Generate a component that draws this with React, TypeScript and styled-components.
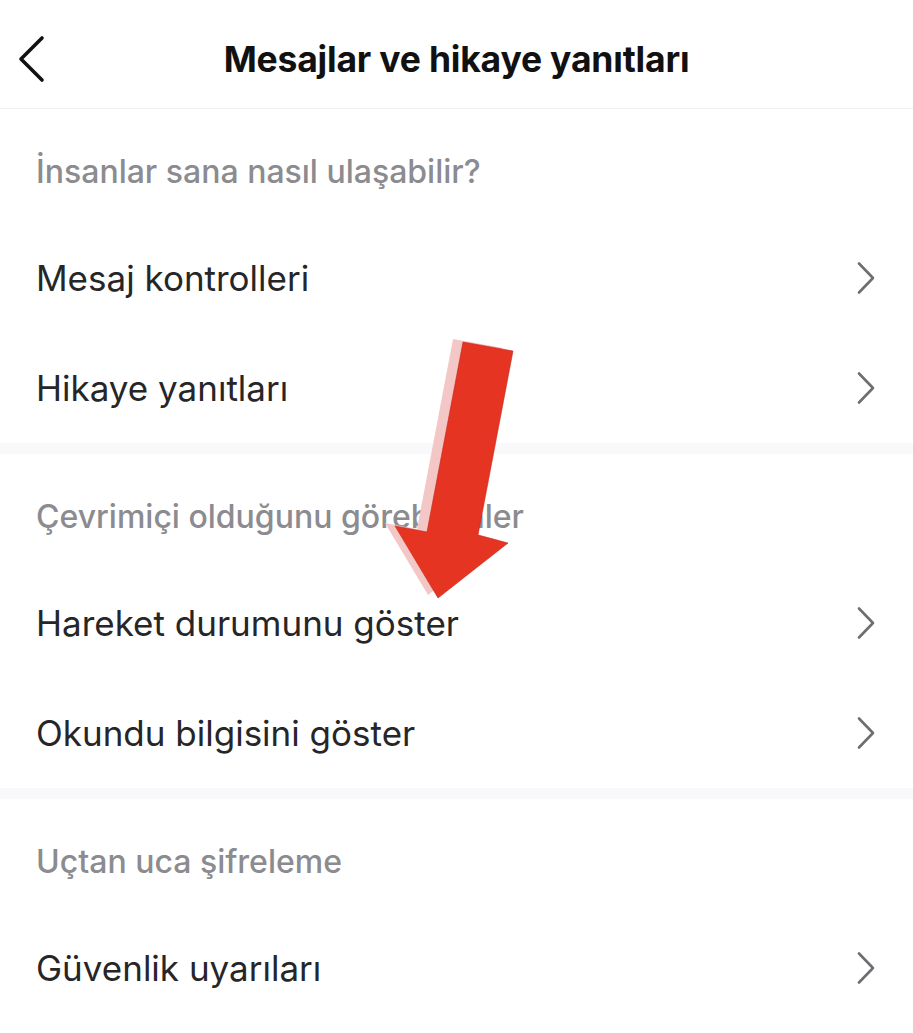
import React from "react";
import styled, { createGlobalStyle } from "styled-components";

const Global = createGlobalStyle`
  html, body { margin: 0; padding: 0; background: #ffffff; }
  body { font-family: Inter, "Noto Sans", sans-serif; -webkit-font-smoothing: antialiased; }
`;

const Page = styled.div`
  position: relative;
  width: 913px;
  height: 1033px;
  overflow: hidden;
  background: #ffffff;
`;

const Header = styled.header`
  display: grid;
  grid-template-columns: 1fr auto 1fr;
  align-items: center;
  height: 108px;
  border-bottom: 1px solid #f0f0f2;
`;

const BackButton = styled.button`
  justify-self: start;
  display: flex;
  align-items: center;
  border: 0;
  background: none;
  padding: 0 0 0 17px;
  margin-top: 10px;
  cursor: pointer;
`;

const Title = styled.h1`
  margin: 10px 0 0 0;
  font-size: 35.5px;
  font-weight: 700;
  color: #111111;
  letter-spacing: -0.2px;
`;

const Section = styled.section<{ $last?: boolean }>`
  border-bottom: ${(p) => (p.$last ? "none" : "11px solid #f9f9fb")};
`;

const SectionLabel = styled.div`
  height: 114px;
  box-sizing: border-box;
  padding: 44px 0 0 36px;
  line-height: 38px;
  font-size: 32px;
  font-weight: 500;
  color: #8b8b90;
`;

const Row = styled.div`
  display: flex;
  align-items: center;
  justify-content: space-between;
  height: 110px;
  padding: 0 36px 0 36px;
  box-sizing: border-box;
`;

const RowText = styled.span`
  font-size: 35px;
  font-weight: 400;
  color: #262628;
`;

const Chevron = () => (
  <svg width="22" height="34" viewBox="0 0 22 34" fill="none">
    <path d="M4 2.5 L18 17 L4 31.5" stroke="#6e6e72" strokeWidth="2.6" strokeLinecap="round" strokeLinejoin="round" />
  </svg>
);

const BackIcon = () => (
  <svg width="30" height="48" viewBox="0 0 30 48" fill="none">
    <path d="M25 3 L4 24 L25 45" stroke="#111" strokeWidth="3.6" strokeLinecap="round" strokeLinejoin="round" />
  </svg>
);

const ArrowLayer = styled.svg`
  position: absolute;
  left: 0;
  top: 0;
  pointer-events: none;
`;

const sections = [
  { label: "İnsanlar sana nasıl ulaşabilir?", rows: ["Mesaj kontrolleri", "Hikaye yanıtları"] },
  { label: "Çevrimiçi olduğunu görebilenler", rows: ["Hareket durumunu göster", "Okundu bilgisini göster"] },
  { label: "Uçtan uca şifreleme", rows: ["Güvenlik uyarıları"] },
];

const redPts = "463,342 513,351 478,535 508,543 438,598 395,526 427,532";

export default function App() {
  return (
    <Page>
      <Global />
      <Header>
        <BackButton aria-label="Geri">
          <BackIcon />
        </BackButton>
        <Title>Mesajlar ve hikaye yanıtları</Title>
        <span />
      </Header>
      {sections.map((s, i) => (
        <Section key={s.label} $last={i === sections.length - 1}>
          <SectionLabel>{s.label}</SectionLabel>
          {s.rows.map((r) => (
            <Row key={r}>
              <RowText>{r}</RowText>
              <Chevron />
            </Row>
          ))}
        </Section>
      ))}
      <ArrowLayer width="913" height="1033" viewBox="0 0 913 1033">
        <polygon points={redPts} fill="#f4c7c7" transform="translate(-10,-3)" />
        <polygon points={redPts} fill="#e63422" stroke="#c4271a" strokeWidth="0.6" />
      </ArrowLayer>
    </Page>
  );
}
